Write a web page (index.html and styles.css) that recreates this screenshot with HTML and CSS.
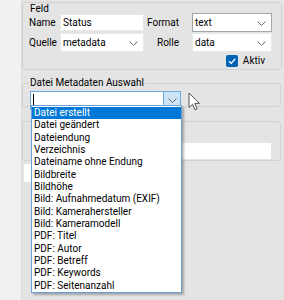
FILE: index.html
```html
<!DOCTYPE html>
<html lang="de">
<head>
<meta charset="utf-8">
<link rel="stylesheet" href="styles.css">
</head>
<body>
<div class="app">
  <div class="side"></div>
  <div class="main">
    <div class="group g1">
      <div class="gtitle">Feld</div>
      <div class="form">
        <span class="lbl">Name</span>
        <div class="field plain">Status</div>
        <span class="lbl right">Format</span>
        <div class="field select hover">text<svg class="chev" viewBox="0 0 9 5"><path d="M0.5 0.5 L4.5 4.5 L8.5 0.5"/></svg></div>
        <span class="lbl">Quelle</span>
        <div class="field select">metadata<svg class="chev" viewBox="0 0 9 5"><path d="M0.5 0.5 L4.5 4.5 L8.5 0.5"/></svg></div>
        <span class="lbl right">Rolle</span>
        <div class="field select">data<svg class="chev" viewBox="0 0 9 5"><path d="M0.5 0.5 L4.5 4.5 L8.5 0.5"/></svg></div>
      </div>
      <div class="check-row">
        <span class="cb"><svg viewBox="0 0 12 12"><path d="M3 6.2 L5.2 8.4 L9.2 3.8"/></svg></span>
        <span>Aktiv</span>
      </div>
    </div>
    <fieldset class="group g2">
      <legend>Datei Metadaten Auswahl</legend>
      <div class="combo">
        <span class="caret"></span>
        <span class="cbtn"><svg class="chev" viewBox="0 0 9 5"><path d="M0.5 0.5 L4.5 4.5 L8.5 0.5"/></svg></span>
      </div>
    </fieldset>
    <div class="group g3">
      <div class="g3field"></div>
    </div>
    <div class="stub"></div>
  </div>
  <ul class="list">
    <li class="sel">Datei erstellt</li>
    <li>Datei geändert</li>
    <li>Dateiendung</li>
    <li>Verzeichnis</li>
    <li>Dateiname ohne Endung</li>
    <li>Bildbreite</li>
    <li>Bildhöhe</li>
    <li>Bild: Aufnahmedatum (EXIF)</li>
    <li>Bild: Kamerahersteller</li>
    <li>Bild: Kameramodell</li>
    <li>PDF: Titel</li>
    <li>PDF: Autor</li>
    <li>PDF: Betreff</li>
    <li>PDF: Keywords</li>
    <li>PDF: Seitenanzahl</li>
  </ul>
  <svg class="cursor" viewBox="0 0 13 19"><path d="M1 1 L1 15.5 L4.5 12.3 L7 17.8 L9.2 16.8 L6.8 11.4 L11.4 11.4 Z"/></svg>
</div>
</body>
</html>
```
FILE: styles.css
```css
* { box-sizing: border-box; }
html, body { margin: 0; padding: 0; }
body {
  font-family: Roboto, "Liberation Sans", sans-serif;
  font-size: 10px;
  color: #000;
  background: #e4e4e4;
}
.app {
  position: relative;
  display: flex;
  width: 284px;
  height: 300px;
  overflow: hidden;
}
.side {
  width: 22px;
  flex: none;
  background: #f1f1f1;
  border-right: 1px solid #dadada;
}
.main {
  flex: 1;
  background: #e4e4e4;
  padding-top: 2px;
  display: flex;
  flex-direction: column;
}
.group {
  border: 1px solid #d2d2d2;
  border-radius: 3px;
  margin: 0 2px 0 0;
}
.g1 {
  height: 68px;
  padding: 0 0 0 6px;
}
.gtitle {
  height: 10px;
  line-height: 12px;
  padding-left: 1px;
}
.form {
  display: grid;
  grid-template-columns: 31px 84px 48px 80px;
  grid-auto-rows: 19px;
  row-gap: 1px;
  align-items: center;
}
.lbl { line-height: 12px; }
.lbl.right { text-align: right; padding-right: 13px; }
.field {
  background: #fff;
  height: 19px;
  line-height: 17px;
  padding-left: 2px;
  border: 1px solid #e8e8e8;
  position: relative;
}
.field.plain { height: 17px; line-height: 15px; }
.field.hover { border-color: #a6a6a6; }
.select .chev {
  position: absolute;
  right: 5px;
  top: 7px;
}
.chev {
  width: 9px;
  height: 5px;
  fill: none;
  stroke: #6a6a6a;
  stroke-width: 1;
}
.check-row {
  display: flex;
  justify-content: flex-end;
  align-items: center;
  gap: 5px;
  padding-right: 16px;
  margin-top: 3px;
  line-height: 12px;
}
.cb {
  width: 12px;
  height: 12px;
  border-radius: 2px;
  background: #0063b8;
  display: flex;
}
.cb svg {
  width: 12px;
  height: 12px;
  fill: none;
  stroke: #fff;
  stroke-width: 1.3;
}
fieldset.g2 {
  margin: 7px 3px 0 0;
  padding: 0 0 3px 7px;
  min-width: 0;
  height: 30px;
}
.g2 legend {
  padding: 0 1px;
  margin-left: -1px;
  line-height: 12px;
}
.combo {
  width: 151px;
  height: 19px;
  background: #fff;
  border: 1px solid #6fa8dc;
  display: flex;
  justify-content: space-between;
  margin-top: 2px;
}
.caret {
  width: 1px;
  height: 13px;
  margin: 2px 0 0 2px;
  background: #000;
}
.cbtn {
  width: 17px;
  height: 17px;
  background: #cde4f7;
  border-left: 1px solid #6fa8dc;
  display: flex;
  align-items: center;
  justify-content: center;
}
.g3 {
  margin: 14px 3px 0 0;
  height: 40px;
  padding: 21px 9px 0 0;
  display: flex;
  justify-content: flex-end;
}
.g3field {
  width: 120px;
  height: 16px;
  background: #fff;
}
.stub {
  width: 7px;
  height: 18px;
  margin: 3px 0 0 2px;
  background: #fff;
}
.list {
  position: absolute;
  left: 31px;
  top: 105px;
  width: 151px;
  margin: 0;
  padding: 1px 0 0 0;
  list-style: none;
  background: #fff;
  border: 1px solid #6a9fd4;
  box-shadow: 2px 2px 2px rgba(0, 0, 0, 0.28);
}
.list li {
  height: 12.35px;
  line-height: 12px;
  padding-left: 2px;
  white-space: nowrap;
}
.list li.sel {
  background: #0078d7;
  color: #fff;
}
.cursor {
  position: absolute;
  left: 188px;
  top: 92px;
  width: 13px;
  height: 19px;
  fill: #fff;
  stroke: #555;
  stroke-width: 1;
  stroke-linejoin: round;
}
```
